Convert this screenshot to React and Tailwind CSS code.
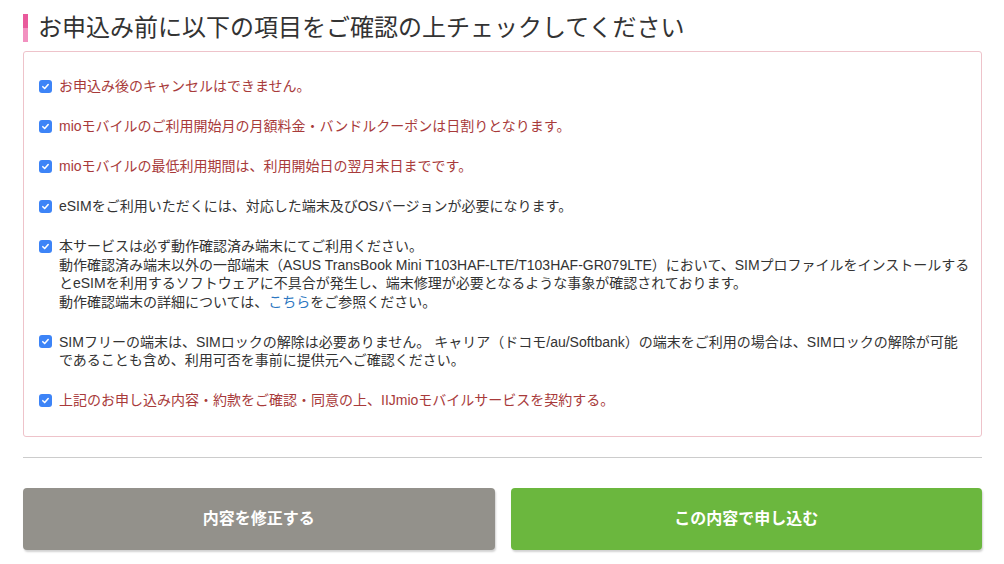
import React from 'react'

const font = { fontFamily: '"Liberation Sans", "Noto Sans CJK JP", sans-serif' }

const items = [
  { red: true, lines: ['お申込み後のキャンセルはできません。'] },
  { red: true, lines: ['mioモバイルのご利用開始月の月額料金・バンドルクーポンは日割りとなります。'] },
  { red: true, lines: ['mioモバイルの最低利用期間は、利用開始日の翌月末日までです。'] },
  { red: false, lines: ['eSIMをご利用いただくには、対応した端末及びOSバージョンが必要になります。'] },
  {
    red: false,
    lines: [
      '本サービスは必ず動作確認済み端末にてご利用ください。',
      '動作確認済み端末以外の一部端末（ASUS TransBook Mini T103HAF-LTE/T103HAF-GR079LTE）において、SIMプロファイルをインストールする',
      'とeSIMを利用するソフトウェアに不具合が発生し、端末修理が必要となるような事象が確認されております。',
      'link',
    ],
  },
  {
    red: false,
    lines: [
      'SIMフリーの端末は、SIMロックの解除は必要ありません。 キャリア（ドコモ/au/Softbank）の端末をご利用の場合は、SIMロックの解除が可能',
      'であることも含め、利用可否を事前に提供元へご確認ください。',
    ],
  },
  { red: true, lines: ['上記のお申し込み内容・約款をご確認・同意の上、IIJmioモバイルサービスを契約する。'] },
]

function Check() {
  return (
    <span className="flex h-[13px] w-[13px] shrink-0 items-center justify-center rounded-[3px] bg-[#3d84f7]">
      <svg width="9" height="9" viewBox="0 0 10 10" fill="none">
        <path d="M2 5.2 L4.1 7.3 L8 2.8" stroke="white" strokeWidth="1.7" strokeLinecap="round" strokeLinejoin="round" />
      </svg>
    </span>
  )
}

export default function App() {
  return (
    <div className="min-h-[564px] w-[1004px] bg-white" style={font}>
      <div className="ml-[23px] w-[959px] pt-[14px]">
        <div className="flex items-center">
          <div className="flex h-[28px] w-[5px] flex-col">
            <div className="flex-1 bg-[#e95a9c]" />
            <div className="flex-1 bg-[#f291c0]" />
          </div>
          <h1 className="ml-[10px] text-[24px] leading-[28px] text-[#333]">
            お申込み前に以下の項目をご確認の上チェックしてください
          </h1>
        </div>

        <div className="mt-[9px] rounded-[3px] border border-[#eec3ca] pb-[26px] pl-[15px] pr-[10px] pt-[25px]">
          <div className="flex flex-col gap-[21.5px]">
            {items.map((item, i) => (
              <div key={i} className="flex items-start">
                <div className="flex h-[18.5px] items-center">
                  <Check />
                </div>
                <div
                  className={
                    'ml-[7px] whitespace-nowrap text-[14px] leading-[18.5px] ' +
                    (item.red ? 'text-[#a83a3a]' : 'text-[#333]')
                  }
                >
                  {item.lines.map((line, j) =>
                    line === 'link' ? (
                      <div key={j}>
                        動作確認端末の詳細については、<a className="text-[#2d78c2]">こちら</a>をご参照ください。
                      </div>
                    ) : (
                      <div key={j}>{line}</div>
                    )
                  )}
                </div>
              </div>
            ))}
          </div>
        </div>

        <div className="mt-[20px] h-px bg-[#cccccc]" />

        <div className="mt-[30px] grid grid-cols-2 gap-[16px]">
          <button className="flex h-[62px] items-center justify-center rounded-[4px] bg-[#93918b] text-[16px] font-semibold text-white shadow-[1px_2px_2px_rgba(0,0,0,0.18)]">
            内容を修正する
          </button>
          <button className="flex h-[62px] items-center justify-center rounded-[4px] bg-[#6bb73e] text-[16px] font-semibold text-white shadow-[1px_2px_2px_rgba(0,0,0,0.18)]">
            この内容で申し込む
          </button>
        </div>
      </div>
    </div>
  )
}
